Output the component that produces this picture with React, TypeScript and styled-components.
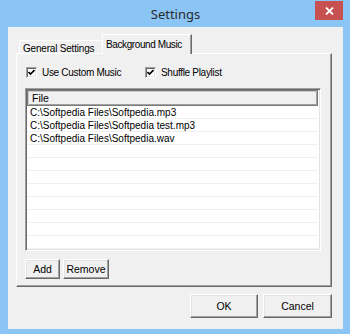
import React from 'react';
import styled, { createGlobalStyle } from 'styled-components';

const Global = createGlobalStyle`
  html, body { margin: 0; padding: 0; width: 350px; height: 334px; overflow: hidden; }
  body { font-family: "Liberation Sans", Arial, sans-serif; font-size: 10px; color: #000; }
  * { box-sizing: border-box; }
`;

const Frame = styled.div`
  width: 350px;
  height: 334px;
  background: #8bc5f6;
  display: flex;
  flex-direction: column;
  padding: 0 7px 5px 8px;
`;

const TitleBar = styled.div`
  height: 29px;
  display: grid;
  grid-template-columns: 1fr auto 1fr;
  align-items: center;
`;

const Title = styled.div`
  grid-column: 2;
  font-family: "Noto Sans", "Open Sans", sans-serif;
  font-size: 13px;
  color: #2a2a2a;
  padding-top: 1px;
`;

const CloseButton = styled.div`
  grid-column: 3;
  justify-self: end;
  align-self: start;
  margin-top: 1px;
  width: 28px;
  height: 19px;
  background: #c75050;
  display: flex;
  align-items: center;
  justify-content: center;
`;

const Client = styled.div`
  flex: 1;
  background: #f0f0f0;
  display: flex;
  flex-direction: column;
  padding: 7px 11px 11px 8px;
`;

const TabStrip = styled.div`
  display: flex;
  align-items: flex-end;
  padding-left: 3px;
  height: 19px;
`;

const Tab = styled.div<{ $active?: boolean }>`
  display: flex;
  align-items: center;
  width: ${p => (p.$active ? '90px' : '83px')};
  padding-left: 3px;
  height: ${p => (p.$active ? '20px' : '13px')};
  margin-bottom: ${p => (p.$active ? '-1px' : '0')};
  background: #f0f0f0;
  border-top: 1px solid #fff;
  border-left: 1px solid #fff;
  border-right: ${p => (p.$active ? '1px solid #696969' : '0')};
  box-shadow: ${p => (p.$active ? 'inset -1px 0 0 #a0a0a0' : 'none')};
  position: relative;
  z-index: ${p => (p.$active ? 1 : 0)};
  padding-top: ${p => (p.$active ? '0' : '2px')};
  white-space: nowrap;
  font-size: 10px;
  letter-spacing: ${p => (p.$active ? '-0.4px' : '-0.2px')};
`;

const Panel = styled.div`
  flex: 1;
  display: flex;
  flex-direction: column;
  border-top: 1px solid #fff;
  border-left: 1px solid #fff;
  border-right: 1px solid #696969;
  border-bottom: 1px solid #696969;
  box-shadow: inset -1px -1px 0 #a0a0a0;
  padding: 12px 10px 7px 8px;
`;

const CheckRow = styled.div`
  display: flex;
  align-items: center;
  height: 12px;
  padding-left: 1px;
`;

const CheckItem = styled.label<{ $width?: number }>`
  display: flex;
  align-items: center;
  gap: 5px;
  width: ${p => (p.$width ? `${p.$width}px` : 'auto')};
  font-size: 10px;
  letter-spacing: -0.3px;
`;

const Box = styled.span`
  width: 11px;
  height: 11px;
  background: #fff;
  border-top: 1px solid #a0a0a0;
  border-left: 1px solid #a0a0a0;
  border-right: 1px solid #fff;
  border-bottom: 1px solid #fff;
  box-shadow: inset 1px 1px 0 #696969, inset -1px -1px 0 #e3e3e3;
  display: flex;
  align-items: center;
  justify-content: center;
`;

const List = styled.div`
  margin-top: 10px;
  flex: 1;
  display: flex;
  flex-direction: column;
  background: #fff;
  border-top: 1px solid #a0a0a0;
  border-left: 1px solid #a0a0a0;
  border-right: 1px solid #fff;
  border-bottom: 1px solid #fff;
  box-shadow: inset 1px 1px 0 #696969, inset -1px -1px 0 #e3e3e3;
  padding: 1px;
  overflow: hidden;
`;

const Header = styled.div`
  height: 16px;
  flex: none;
  background: #f0f0f0;
  border: 1px solid #7a7a7a;
  box-shadow: inset 1px 1px 0 #c8c8c8, inset -1px -1px 0 #a0a0a0;
  display: flex;
  align-items: center;
  padding-left: 4px;
  font-size: 10.5px;
  margin-right: 1px;
`;

const Row = styled.div`
  height: 13px;
  flex: none;
  display: flex;
  align-items: center;
  padding-left: 3px;
  border-bottom: 1px solid #f0f0f0;
  margin-right: 1px;
  white-space: nowrap;
  font-size: 10px;
`;

const ButtonRow = styled.div<{ $end?: boolean }>`
  display: flex;
  gap: 3px;
  justify-content: ${p => (p.$end ? 'flex-end' : 'flex-start')};
  gap: ${p => (p.$end ? '5px' : '3px')};
  margin-top: ${p => (p.$end ? '7px' : '8px')};
`;

const Button = styled.div<{ $w: number; $h: number }>`
  width: ${p => p.$w}px;
  height: ${p => p.$h}px;
  background: #f0f0f0;
  border-top: 1px solid #fff;
  border-left: 1px solid #fff;
  border-right: 1px solid #696969;
  border-bottom: 1px solid #696969;
  box-shadow: inset -1px -1px 0 #a0a0a0, inset 1px 1px 0 #e3e3e3;
  display: flex;
  align-items: center;
  justify-content: center;
  font-size: 10.5px;
`;

const files = [
  'C:\\Softpedia Files\\Softpedia.mp3',
  'C:\\Softpedia Files\\Softpedia test.mp3',
  'C:\\Softpedia Files\\Softpedia.wav',
];

const Check = () => (
  <Box>
    <svg width="7" height="7" viewBox="0 0 7 7">
      <path d="M0.5 3 L2.5 5 L6.5 1" stroke="#000" strokeWidth="1.6" fill="none" />
    </svg>
  </Box>
);

export default function App() {
  const rows = [...files, ...Array(8).fill('')];
  return (
    <>
      <Global />
      <Frame>
        <TitleBar>
          <Title>Settings</Title>
          <CloseButton>
            <svg width="9" height="8" viewBox="0 0 9 8">
              <path d="M1 0.5 L8 7.5 M8 0.5 L1 7.5" stroke="#fff" strokeWidth="1.8" />
            </svg>
          </CloseButton>
        </TitleBar>
        <Client>
          <TabStrip>
            <Tab>General Settings</Tab>
            <Tab $active>Background Music</Tab>
          </TabStrip>
          <Panel>
            <CheckRow>
              <CheckItem $width={119}>
                <Check />
                Use Custom Music
              </CheckItem>
              <CheckItem>
                <Check />
                Shuffle Playlist
              </CheckItem>
            </CheckRow>
            <List>
              <Header>File</Header>
              {rows.map((r, i) => (
                <Row key={i}>{r}</Row>
              ))}
            </List>
            <ButtonRow>
              <Button $w={35} $h={20}>Add</Button>
              <Button $w={46} $h={20}>Remove</Button>
            </ButtonRow>
          </Panel>
          <ButtonRow $end>
            <Button $w={68} $h={24}>OK</Button>
            <Button $w={69} $h={24}>Cancel</Button>
          </ButtonRow>
        </Client>
      </Frame>
    </>
  );
}
